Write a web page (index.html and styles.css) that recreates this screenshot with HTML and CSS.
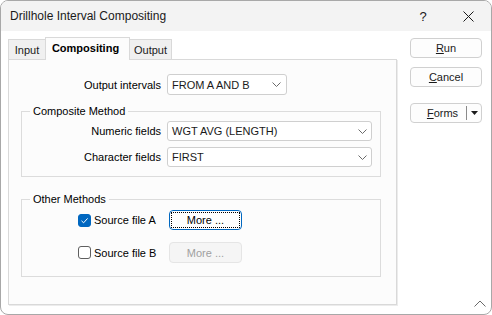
FILE: index.html
```html
<!DOCTYPE html>
<html>
<head>
<meta charset="utf-8">
<link rel="stylesheet" href="styles.css">
</head>
<body>
<div class="window">
  <div class="titlebar">
    <span class="title">Drillhole Interval Compositing</span>
    <span class="tb-btn tb-help">?</span>
    <span class="tb-btn tb-close">
      <svg width="11" height="11" viewBox="0 0 11 11"><path d="M0.5 0.5 L10.5 10.5 M10.5 0.5 L0.5 10.5" stroke="#1a1a1a" stroke-width="1" fill="none"/></svg>
    </span>
  </div>
  <div class="body">
    <div class="main">
      <div class="tabs">
        <div class="tab tab-input">Input</div>
        <div class="tab tab-active">Compositing</div>
        <div class="tab tab-output">Output</div>
      </div>
      <div class="panel">
        <div class="row top-row">
          <span class="lbl lbl-top">Output intervals</span>
          <div class="combo combo-short">
            <span>FROM A AND B</span>
            <svg class="chev" width="9" height="5" viewBox="0 0 9 5"><path d="M0.5 0.5 L4.5 4.5 L8.5 0.5" stroke="#6a6a6a" stroke-width="1" fill="none"/></svg>
          </div>
        </div>
        <fieldset class="group group-comp">
          <legend>Composite Method</legend>
          <div class="row">
            <span class="lbl lbl-grp">Numeric fields</span>
            <div class="combo combo-long">
              <span>WGT AVG (LENGTH)</span>
              <svg class="chev" width="9" height="5" viewBox="0 0 9 5"><path d="M0.5 0.5 L4.5 4.5 L8.5 0.5" stroke="#6a6a6a" stroke-width="1" fill="none"/></svg>
            </div>
          </div>
          <div class="row row-gap">
            <span class="lbl lbl-grp">Character fields</span>
            <div class="combo combo-long">
              <span>FIRST</span>
              <svg class="chev" width="9" height="5" viewBox="0 0 9 5"><path d="M0.5 0.5 L4.5 4.5 L8.5 0.5" stroke="#6a6a6a" stroke-width="1" fill="none"/></svg>
            </div>
          </div>
        </fieldset>
        <fieldset class="group group-other">
          <legend>Other Methods</legend>
          <div class="checks">
            <div class="crow">
              <div class="check-wrap">
                <span class="cbox checked">
                  <svg width="13" height="13" viewBox="0 0 13 13"><path d="M3.5 6.8 L5.6 8.8 L9.6 4.4" stroke="#ffffff" stroke-width="1" fill="none"/></svg>
                </span>
                <span class="clbl">Source file A</span>
              </div>
              <div class="btn more focused"><span class="focus-ring">More ...</span></div>
            </div>
            <div class="crow crow-b">
              <div class="check-wrap">
                <span class="cbox"></span>
                <span class="clbl">Source file B</span>
              </div>
              <div class="btn more disabled">More ...</div>
            </div>
          </div>
        </fieldset>
      </div>
    </div>
    <div class="side">
      <div class="btn side-btn"><span><u>R</u>un</span></div>
      <div class="btn side-btn btn-cancel"><span><u>C</u>ancel</span></div>
      <div class="btn side-btn btn-forms">
        <span class="forms-text"><u>F</u>orms</span>
        <span class="forms-div"></span>
        <span class="forms-arrow">
          <svg width="7" height="4" viewBox="0 0 7 4"><path d="M0 0 L7 0 L3.5 4 Z" fill="#1a1a1a"/></svg>
        </span>
      </div>
    </div>
  </div>
  <svg class="grip" width="12" height="7" viewBox="0 0 12 7"><path d="M0.5 6.5 L6 1 L11.5 6.5" stroke="#6a6a6a" stroke-width="1" fill="none"/></svg>
</div>
</body>
</html>
```

FILE: styles.css
```css
* { box-sizing: border-box; }
html, body { margin: 0; padding: 0; background: #ffffff; }
body {
  font-family: "Liberation Sans", Arial, sans-serif;
  font-size: 11px;
  color: #000;
}
.window {
  position: relative;
  width: 492px;
  height: 315px;
  border: 1px solid #a8a8a8;
  border-radius: 8px;
  background: #ffffff;
  overflow: hidden;
}
.titlebar {
  height: 30px;
  background: #f3f3f3;
  display: flex;
  align-items: center;
  padding-left: 9px;
}
.title {
  font-size: 12px;
  color: #1a1a1a;
  flex: 1;
  padding-bottom: 1px;
}
.tb-btn {
  display: flex;
  align-items: center;
  justify-content: center;
  height: 30px;
}
.tb-help {
  width: 46px;
  font-size: 13px;
  color: #1a1a1a;
}
.tb-close { width: 45px; }
.body {
  display: flex;
  padding: 6px 0 0 7px;
}
.main { width: 389px; }
.tabs {
  display: flex;
  align-items: flex-end;
  height: 22px;
}
.tab {
  height: 20px;
  border: 1px solid #d9d9d9;
  border-bottom: none;
  background: #f0f0f0;
  display: flex;
  align-items: center;
  justify-content: center;
  color: #1a1a1a;
}
.tab-input { width: 37px; border-right: none; }
.tab-output { width: 42px; border-left: none; }
.tab-active {
  width: 85px;
  height: 23px;
  margin-bottom: -1px;
  background: #fcfcfc;
  font-weight: bold;
  position: relative;
  z-index: 1;
  padding-bottom: 3px;
  padding-right: 4px;
  color: #000;
}
.panel {
  height: 246px;
  border: 1px solid #d9d9d9;
  background: #fcfcfc;
  box-shadow: 1px 1px 0 #ececec;
  padding-top: 14px;
}
.row {
  display: flex;
  align-items: center;
  gap: 6px;
}
.row-gap { margin-top: 6px; }
.lbl { text-align: right; color: #000; }
.lbl-top { width: 152px; }
.lbl-grp { width: 139px; }
.combo {
  height: 20px;
  border: 1px solid #cfcfcf;
  border-radius: 3px;
  background: #ffffff;
  display: flex;
  align-items: center;
  justify-content: space-between;
  padding: 0 4px 0 4px;
  color: #1a1a1a;
}
.combo-short { width: 120px; height: 21px; padding-right: 5px; }
.combo-long { width: 205px; }
.chev { display: block; }
.group {
  margin: 8px 0 0 12px;
  width: 360px;
  border: 1px solid #dcdcdc;
  padding: 2px 0 9px 0;
  min-width: 0;
}
.group legend {
  margin-left: 8px;
  padding: 0 3px;
  line-height: 16px;
  color: #000;
}
.group-other {
  margin-top: 14px;
  padding: 3px 0 13px 0;
}
.checks { padding-left: 56px; }
.crow {
  display: flex;
  align-items: center;
  height: 20px;
}
.crow-b { margin-top: 12px; height: 21px; }
.check-wrap {
  width: 91px;
  display: flex;
  align-items: center;
  gap: 3px;
}
.cbox {
  width: 13px;
  height: 13px;
  border: 1px solid #5f5f5f;
  border-radius: 3px;
  background: #ffffff;
  display: block;
  flex: none;
}
.cbox svg { display: block; margin: -1px; }
.cbox.checked {
  background: #0067c0;
  border-color: #0067c0;
}
.clbl { color: #000; }
.btn {
  border: 1px solid #d0d0d0;
  border-radius: 4px;
  background: #fdfdfd;
  display: flex;
  align-items: center;
  justify-content: center;
  color: #1a1a1a;
}
.more { width: 73px; height: 100%; }
.more.focused {
  border-color: #0067c0;
  background: #ffffff;
  padding: 1px;
}
.focus-ring {
  flex: 1;
  align-self: stretch;
  border: 1px dotted #000;
  display: flex;
  align-items: center;
  justify-content: center;
  color: #000;
}
.more.disabled {
  background: #f5f5f5;
  border-color: #e5e5e5;
  color: #a0a0a0;
}
.side {
  margin-left: 13px;
  padding-top: 1px;
  display: flex;
  flex-direction: column;
}
.side-btn { width: 72px; height: 20px; }
.btn-cancel { margin-top: 9px; }
.btn-forms {
  margin-top: 16px;
  justify-content: flex-start;
}
.forms-text { width: 55px; text-align: center; padding-left: 8px; }
.forms-div {
  width: 1px;
  height: 14px;
  background: #8a8a8a;
}
.forms-arrow {
  flex: 1;
  display: flex;
  justify-content: center;
  align-items: center;
}
.forms-arrow svg { display: block; }
.grip {
  position: absolute;
  right: 5px;
  bottom: 7px;
}
```
